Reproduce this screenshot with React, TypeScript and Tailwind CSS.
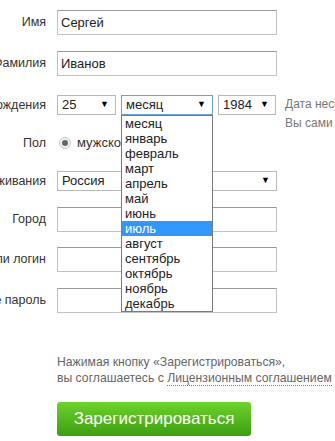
const months = [
  "месяц",
  "январь",
  "февраль",
  "март",
  "апрель",
  "май",
  "июнь",
  "июль",
  "август",
  "сентябрь",
  "октябрь",
  "ноябрь",
  "декабрь",
]

function Label({ text }: { text: string }) {
  return (
    <div className="flex w-[46px] shrink-0 justify-end whitespace-nowrap text-[12.5px] text-[#333]">
      {text}
    </div>
  )
}

function TextInput({ value = "" }: { value?: string }) {
  return (
    <div className="flex h-[25px] w-[220px] items-center border border-[#c2c2c2] border-t-[#9a9a9a] bg-white pl-[3px] text-[13px] text-[#222]">
      {value}
    </div>
  )
}

function FakeSelect({
  value,
  width,
  focused = false,
}: {
  value: string
  width: string
  focused?: boolean
}) {
  return (
    <div
      className={
        "flex h-[20px] items-center justify-between bg-white pl-[4px] pr-[6px] text-[13px] text-[#222] " +
        width +
        (focused ? " border border-[#6f9fd8]" : " border border-[#b8b8b8]")
      }
    >
      <span>{value}</span>
      <span className="text-[9px] text-black">▼</span>
    </div>
  )
}

export default function App() {
  return (
    <div className="relative h-[441px] w-[335px] overflow-hidden bg-white font-['Liberation_Sans',Arial,sans-serif]">
      <div className="pt-[10px]">
        {/* имя */}
        <div className="flex h-[25px] items-center gap-[11px]">
          <Label text="Имя" />
          <TextInput value="Сергей" />
        </div>

        <div className="mt-[16px] flex h-[25px] items-center gap-[11px]">
          <Label text="Фамилия" />
          <TextInput value="Иванов" />
        </div>

        {/* дата рождения */}
        <div className="mt-[19px] flex h-[20px] items-start">
          <div className="flex h-[20px] items-center">
            <Label text="Дата рождения" />
          </div>
          <div className="ml-[11px] flex gap-[5px]">
            <FakeSelect value="25" width="w-[59px]" />
            <div className="relative">
              <FakeSelect value="месяц" width="w-[92px]" focused />
              <div className="absolute left-0 top-full z-10 w-[92px] border border-[#7a7a7a] bg-white">
                {months.map((m) => (
                  <div
                    key={m}
                    className={
                      m === "июль"
                        ? "h-[15px] bg-[#3396fa] pl-[3px] text-[13px] leading-[15px] text-white"
                        : "h-[15px] pl-[3px] text-[13px] leading-[15px] text-[#222]"
                    }
                  >
                    {m}
                  </div>
                ))}
              </div>
            </div>
            <FakeSelect value="1984" width="w-[58px]" />
          </div>
          <div className="ml-[9px] whitespace-nowrap text-[12px] leading-[19px] text-[#777]">
            Дата несёт важную информацию
            <br />
            Вы сами решаете, кому её показывать
          </div>
        </div>

        {/* пол */}
        <div className="mt-[18px] flex h-[20px] items-center gap-[11px]">
          <Label text="Пол" />
          <div className="flex items-center gap-[6px] text-[13px] text-[#333]">
            <span className="ml-[2px] flex h-[12px] w-[12px] items-center justify-center rounded-full border border-[#c4c4c4] bg-[#f2f2f2]">
              <span className="h-[6px] w-[6px] rounded-full bg-[#666]" />
            </span>
            <span>мужской</span>
          </div>
        </div>

        <div className="mt-[18px] flex h-[20px] items-center gap-[11px]">
          <Label text="Место проживания" />
          <FakeSelect value="Россия" width="w-[220px]" />
        </div>

        <div className="mt-[16px] flex h-[25px] items-center gap-[11px]">
          <Label text="Город" />
          <TextInput />
        </div>

        <div className="mt-[15px] flex h-[25px] items-center gap-[11px]">
          <Label text="Email или логин" />
          <TextInput />
        </div>

        <div className="mt-[16px] flex h-[25px] items-center gap-[11px]">
          <Label text="Придумайте пароль" />
          <TextInput />
        </div>

        <div className="ml-[57px] mt-[41px] whitespace-nowrap text-[12.2px] leading-[16px] text-[#666]">
          <div>Нажимая кнопку «Зарегистрироваться»,</div>
          <div>
            вы соглашаетесь с{" "}
            <span className="border-b border-dotted border-[#777]">Лицензионным соглашением</span>
          </div>
        </div>

        <button className="ml-[57px] mt-[16px] flex h-[34px] w-[194px] items-center justify-center rounded-[3px] bg-gradient-to-b from-[#6ed22c] to-[#3c9f0f] text-[17px] text-white">
          Зарегистрироваться
        </button>
      </div>
    </div>
  )
}
